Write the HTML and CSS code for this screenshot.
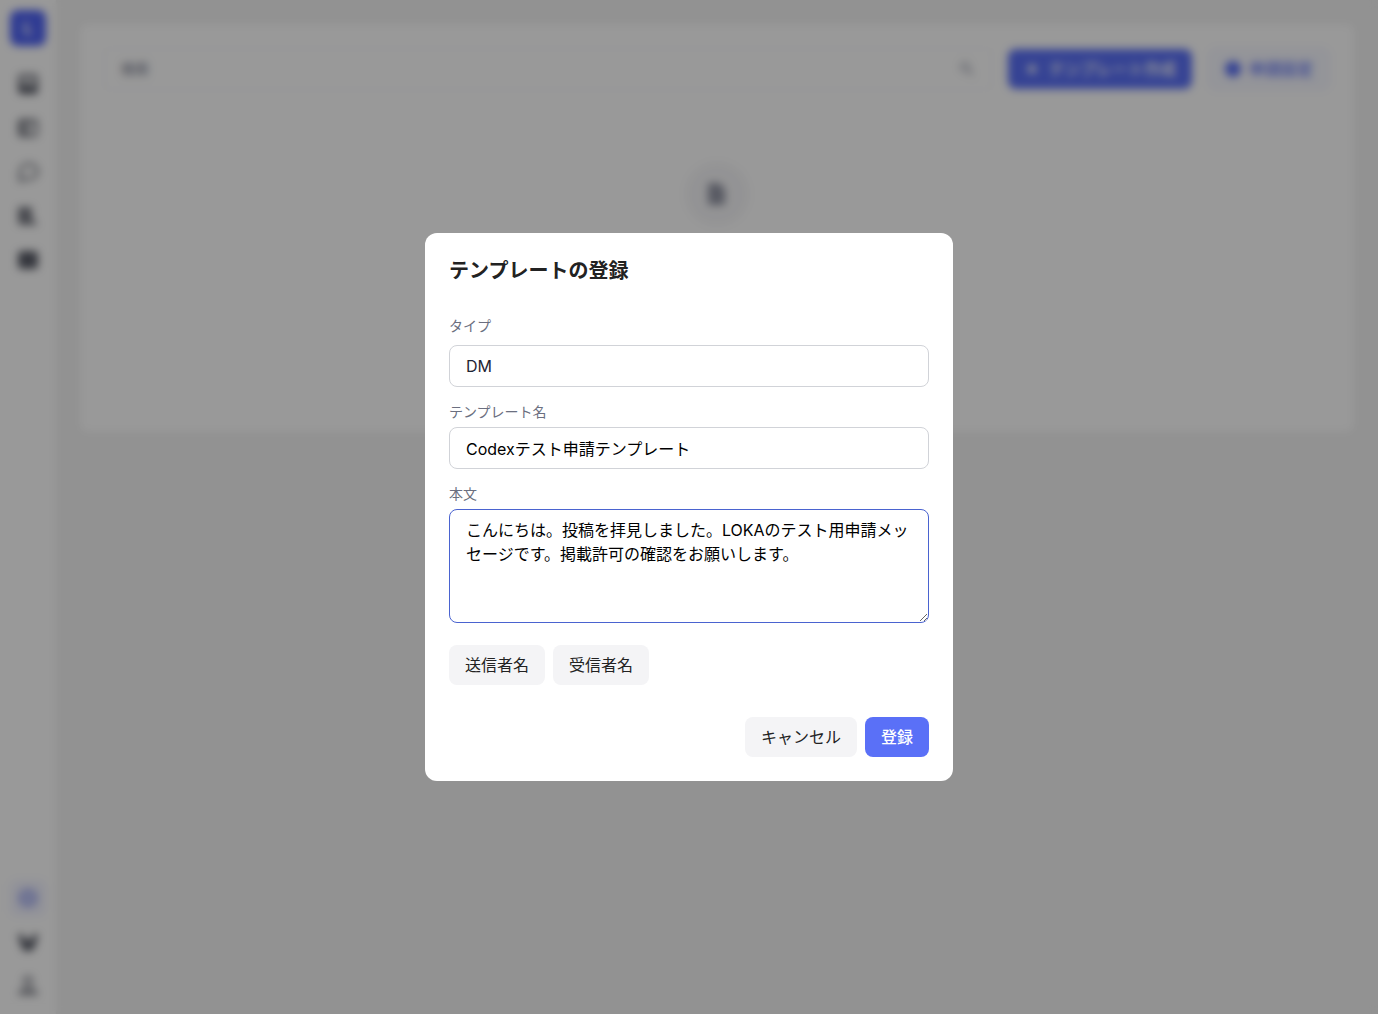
FILE: index.html
```html
<!DOCTYPE html>
<html lang="ja">
<head>
    <meta charset="UTF-8">
    <meta name="viewport" content="width=device-width, initial-scale=1.0">
    <title>LOKA</title>
    <link rel="stylesheet" href="styles.css">
</head>
<body>
    <div class="app">
        <nav class="sidebar">
            <a class="logo" href="#">L</a>
            <div class="nav-group">
                <a class="nav-item" href="#" aria-label="画像">
                    <svg viewBox="0 0 24 24"><rect x="3" y="3" width="18" height="18" rx="3" fill="currentColor" opacity=".35"/><rect x="3" y="3" width="18" height="18" rx="3" fill="none" stroke="currentColor" stroke-width="2"/><path d="M3 15l5-3 5 3 8-2v6a3 3 0 0 1-3 3H6a3 3 0 0 1-3-3z" fill="currentColor"/></svg>
                </a>
                <a class="nav-item" href="#" aria-label="カード">
                    <svg viewBox="0 0 24 24"><rect x="3" y="4" width="18" height="16" rx="3" fill="none" stroke="currentColor" stroke-width="2"/><path d="M4 5h8v14H4z" fill="currentColor" opacity=".6"/><path d="M12 8h7M12 16h4" stroke="currentColor" stroke-width="2"/></svg>
                </a>
                <a class="nav-item" href="#" aria-label="メッセージ">
                    <svg viewBox="0 0 24 24"><path d="M12 4h1a8 7 0 0 1 0 15H8l-4 2v-9a8 8 0 0 1 8-8z" fill="none" stroke="currentColor" stroke-width="2"/></svg>
                </a>
                <a class="nav-item" href="#" aria-label="分析">
                    <svg viewBox="0 0 24 24"><path d="M2 3h14v11l6 7H5a3 3 0 0 1-3-3z" fill="currentColor" opacity=".8"/></svg>
                </a>
                <a class="nav-item" href="#" aria-label="一覧">
                    <svg viewBox="0 0 24 24"><rect x="2" y="3" width="20" height="18" rx="4" fill="currentColor"/></svg>
                </a>
            </div>
            <div class="nav-group nav-bottom">
                <a class="nav-item active" href="#" aria-label="設定">
                    <svg viewBox="0 0 24 24"><path d="M12 2l9 5v10l-9 5-9-5V7z" fill="currentColor" opacity=".7"/><circle cx="12" cy="12" r="3" fill="#eef0ff"/></svg>
                </a>
                <a class="nav-item" href="#" aria-label="お知らせ">
                    <svg viewBox="0 0 24 24"><circle cx="5" cy="7" r="3" fill="currentColor"/><circle cx="19" cy="7" r="3" fill="currentColor"/><path d="M4 8l8 2 8-2v6l-4 7H8l-4-7z" fill="currentColor"/></svg>
                </a>
                <a class="nav-item" href="#" aria-label="アカウント">
                    <svg viewBox="0 0 24 24"><circle cx="12" cy="7" r="4" fill="none" stroke="currentColor" stroke-width="2"/><path d="M2 21c0-5 4-7 10-7s10 2 10 7z" fill="currentColor" opacity=".7"/></svg>
                </a>
            </div>
        </nav>

        <main class="main">
            <section class="card">
                <div class="toolbar">
                    <label class="search">
                        <input type="text" placeholder="検索" aria-label="検索">
                        <svg viewBox="0 0 16 16"><circle cx="6" cy="6" r="4" fill="none" stroke="currentColor" stroke-width="1.5"/><path d="M9 9l5 5" stroke="currentColor" stroke-width="1.5"/></svg>
                    </label>
                    <button class="btn btn-primary" type="button">
                        <svg width="16" height="16" viewBox="0 0 16 16"><path d="M8 3v10M3 8h10" stroke="currentColor" stroke-width="3"/></svg>
                        テンプレート作成
                    </button>
                    <button class="btn btn-outline" type="button">
                        <svg width="16" height="16" viewBox="0 0 16 16"><circle cx="8" cy="8" r="8" fill="currentColor"/></svg>
                        申請設定
                    </button>
                </div>
                <div class="empty">
                    <div class="empty-icon">
                        <svg viewBox="0 0 24 24"><path d="M5 1h9l6 6v14a2 2 0 0 1-2 2H5a2 2 0 0 1-2-2V3a2 2 0 0 1 2-2z" fill="currentColor"/></svg>
                    </div>
                </div>
            </section>
        </main>
    </div>

    <div class="overlay">
        <form class="modal" role="dialog" aria-modal="true" aria-labelledby="modalTitle">
            <h2 id="modalTitle">テンプレートの登録</h2>

            <div class="field field-type">
                <label for="type">タイプ</label>
                <select id="type">
                    <option>DM</option>
                </select>
            </div>
            <div class="field">
                <label for="name">テンプレート名</label>
                <input type="text" id="name" value="Codexテスト申請テンプレート">
            </div>
            <div class="field">
                <label for="body">本文</label>
                <textarea id="body" class="focused" rows="4">こんにちは。投稿を拝見しました。LOKAのテスト用申請メッセージです。掲載許可の確認をお願いします。</textarea>
            </div>

            <div class="variables">
                <button class="btn btn-light" type="button">送信者名</button>
                <button class="btn btn-light" type="button">受信者名</button>
            </div>
            <div class="actions">
                <button class="btn btn-light" type="button">キャンセル</button>
                <button class="btn btn-primary" type="submit">登録</button>
            </div>
        </form>
    </div>
</body>
</html>
```

FILE: styles.css
```css
* {
    box-sizing: border-box;
}
body {
    margin: 0;
    font-family: Inter, "Noto Sans CJK JP", sans-serif;
    font-size: 16px;
    line-height: 24px;
    color: #222;
    background: #f3f3f3;
}
button, input, select, textarea {
    font: inherit;
    color: inherit;
}
.app {
    display: flex;
    min-height: 100vh;
}

/* sidebar */
.sidebar {
    display: flex;
    flex-direction: column;
    gap: 20px;
    width: 56px;
    padding: 10px;
    background: #fff;
}
.logo {
    display: flex;
    align-items: center;
    justify-content: center;
    height: 36px;
    border-radius: 8px;
    background: #5064f5;
    color: #fff;
    font-weight: 700;
    text-decoration: none;
}
.nav-group {
    display: flex;
    flex-direction: column;
    gap: 8px;
}
.nav-bottom {
    margin-top: auto;
}
.nav-item {
    display: flex;
    align-items: center;
    justify-content: center;
    height: 36px;
    border-radius: 8px;
    color: #5a5d68;
}
.nav-item svg {
    width: 24px;
    height: 24px;
}
.nav-item.active {
    background: #f2f3ff;
    color: #8b97ee;
}

/* template list */
.main {
    flex: 1;
    padding: 24px;
}
.card {
    padding: 24px;
    border-radius: 8px;
    background: #fff;
}
.toolbar {
    display: flex;
    align-items: center;
    gap: 16px;
}
.search {
    display: flex;
    flex: 1;
    align-items: center;
    height: 42px;
    padding: 0 16px;
    border: 1px solid #f8f8fa;
    border-radius: 8px;
    color: #858a9c;
}
.search input {
    flex: 1;
    min-width: 0;
    padding: 0;
    border: 0;
    background: none;
    font-size: 14px;
    outline: none;
}
.search input::placeholder {
    color: #70758a;
}
.search svg {
    width: 16px;
    height: 16px;
}
.empty {
    display: flex;
    justify-content: center;
    padding: 72px 0 182px;
}
.empty-icon {
    display: flex;
    align-items: center;
    justify-content: center;
    width: 64px;
    height: 64px;
    border-radius: 50%;
    background: #f6f6f8;
    color: #9497a6;
}
.empty-icon svg {
    width: 24px;
    height: 28px;
}

.btn {
    display: inline-flex;
    align-items: center;
    justify-content: center;
    gap: 8px;
    height: 40px;
    padding: 0 16px;
    border: 0;
    border-radius: 8px;
    white-space: nowrap;
    cursor: pointer;
}
.btn-primary {
    background: #5a70f7;
    color: #fff;
    font-weight: 500;
}
.btn-light {
    background: #f4f4f6;
    color: #222;
}
.btn-outline {
    height: 42px;
    background: #f7f8ff;
    border: 1px solid #eceffe;
    color: #5a70f7;
    font-weight: 500;
}

/* modal */
.overlay {
    position: fixed;
    inset: 0;
    display: flex;
    align-items: center;
    justify-content: center;
    background: rgba(0, 0, 0, 0.4);
    backdrop-filter: blur(4px);
}
.modal {
    width: 100%;
    max-width: 528px;
    padding: 24px;
    border-radius: 12px;
    background: #fff;
}
.modal h2 {
    margin: 0 0 32px;
    font-size: 20px;
    line-height: 28px;
    font-weight: 700;
}
.field {
    display: flex;
    flex-direction: column;
    gap: 6px;
    margin-bottom: 16px;
}
.field-type {
    gap: 10px;
}
.field label {
    font-size: 14px;
    line-height: 18px;
    color: #6b6f80;
}
.field input,
.field select,
.field textarea {
    display: block;
    width: 100%;
    padding: 8px 16px;
    border: 1px solid #d1d3d8;
    border-radius: 8px;
    background: #fff;
    color: #000;
    outline: none;
}
.field input,
.field select {
    height: 42px;
}
.field select {
    appearance: none;
    color: #1f2433;
}
.field textarea {
    resize: vertical;
}
.field textarea.focused {
    border-color: #4a63d0;
}
.variables {
    display: flex;
    gap: 8px;
    margin-top: 22px;
}
.actions {
    display: flex;
    justify-content: flex-end;
    gap: 8px;
    margin-top: 32px;
}
```
